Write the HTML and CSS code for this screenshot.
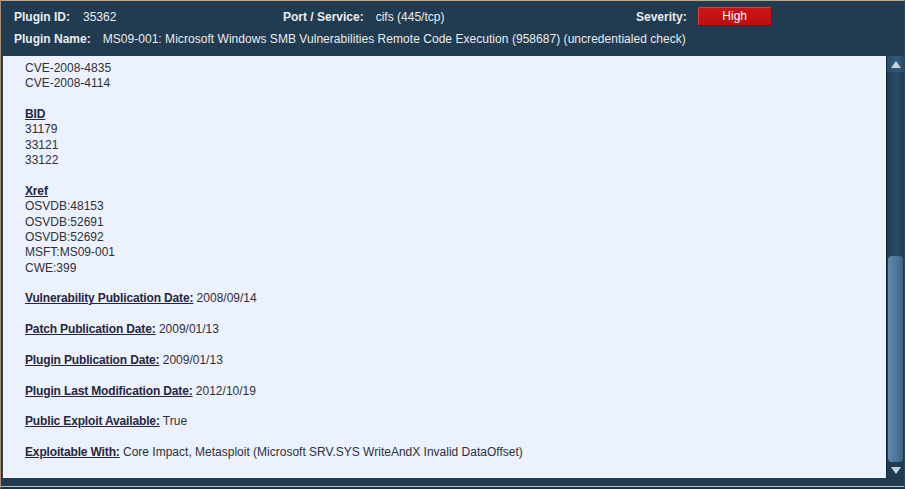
FILE: index.html
```html
<!DOCTYPE html>
<html>
<head>
<meta charset="utf-8">
<link rel="stylesheet" href="styles.css">
</head>
<body>
<div class="frame">
  <div class="header">
    <div class="row row1">
      <div class="field f-id"><span class="lbl">Plugin ID:</span><span class="val">35362</span></div>
      <div class="field f-port"><span class="lbl">Port / Service:</span><span class="val">cifs (445/tcp)</span></div>
      <div class="field f-sev"><span class="lbl">Severity:</span><span class="badge">High</span></div>
    </div>
    <div class="row row2">
      <div class="field"><span class="lbl">Plugin Name:</span><span class="val">MS09-001: Microsoft Windows SMB Vulnerabilities Remote Code Execution (958687) (uncredentialed check)</span></div>
    </div>
  </div>
  <div class="body">
    <div class="content">
      <div class="group">
        <div>CVE-2008-4835</div>
        <div>CVE-2008-4114</div>
      </div>
      <div class="group">
        <div class="h">BID</div>
        <div>31179</div>
        <div>33121</div>
        <div>33122</div>
      </div>
      <div class="group">
        <div class="h">Xref</div>
        <div>OSVDB:48153</div>
        <div>OSVDB:52691</div>
        <div>OSVDB:52692</div>
        <div>MSFT:MS09-001</div>
        <div>CWE:399</div>
      </div>
      <div class="group"><span class="h">Vulnerability Publication Date:</span> 2008/09/14</div>
      <div class="group"><span class="h">Patch Publication Date:</span> 2009/01/13</div>
      <div class="group"><span class="h">Plugin Publication Date:</span> 2009/01/13</div>
      <div class="group"><span class="h">Plugin Last Modification Date:</span> 2012/10/19</div>
      <div class="group"><span class="h">Public Exploit Available:</span> True</div>
      <div class="group"><span class="h">Exploitable With:</span> Core Impact, Metasploit (Microsoft SRV.SYS WriteAndX Invalid DataOffset)</div>
    </div>
    <div class="scrollbar">
      <div class="sb-btn up"><span class="tri-up"></span></div>
      <div class="sb-track">
        <div class="sb-thumb"></div>
      </div>
      <div class="sb-btn down"><span class="tri-down"></span></div>
    </div>
  </div>
  <div class="footer"></div>
</div>
</body>
</html>
```
FILE: styles.css
```css
html, body {
  margin: 0;
  padding: 0;
  background: #203a4f;
}
body {
  width: 905px;
  height: 489px;
  overflow: hidden;
  font-family: "Liberation Sans", Arial, sans-serif;
  font-size: 12px;
}
.frame {
  width: 905px;
  height: 489px;
  box-sizing: border-box;
  border-top: 1px solid #c9a27f;
  border-left: 1px solid #a88a72;
  border-right: 1px solid #2c4658;
  border-bottom: 2px solid #1c3244;
  background: #213b50;
  display: flex;
  flex-direction: column;
}
.header {
  height: 55px;
  box-sizing: border-box;
  padding: 6px 0 0 13px;
  color: #e9ecef;
}
.row {
  display: flex;
  align-items: center;
}
.row1 { height: 19px; }
.row2 { height: 19px; margin-top: 3px; }
.field { display: flex; align-items: center; }
.lbl { font-weight: bold; }
.f-id { width: 269px; }
.f-id .val { margin-left: 13px; }
.f-port { width: 353px; }
.f-port .val { margin-left: 12px; }
.f-sev .lbl { margin-right: 11px; }
.row2 .val { margin-left: 12px; letter-spacing: 0.04px; }
.badge {
  width: 74px;
  height: 19px;
  box-sizing: border-box;
  background: linear-gradient(to bottom, #cc1414, #bd0e0e);
  border: 1px solid #d84040;
  border-bottom-color: #8a0a0a;
  border-right-color: #8a0a0a;
  border-radius: 2px;
  color: #fff;
  text-align: center;
  line-height: 17px;
  font-size: 12px;
}
.body {
  display: flex;
  height: 422px;
  margin-left: 1px;
  border-left: 1px solid #3a3f47;
}
.content {
  flex: 1;
  background: #ecf2fd;
  color: #2f2f38;
  padding: 5px 0 0 22px;
  line-height: 15.36px;
  overflow: hidden;
}
.group { margin-bottom: 15.36px; }
.h {
  font-weight: bold;
  text-decoration: underline;
  color: #26263e;
  letter-spacing: -0.15px;
}
.scrollbar {
  width: 17px;
  border-left: 1px solid #13283a;
  display: flex;
  flex-direction: column;
  background: linear-gradient(to right, #1e3b52, #2b4d66 60%, #1e3a50);
}
.sb-btn {
  height: 16px;
  display: flex;
  align-items: center;
  justify-content: center;
  background: linear-gradient(to right, #2a4c66, #35597a 60%, #2a4a63);
}
.sb-btn.down { background: #203c53; }
.tri-up {
  width: 0; height: 0;
  border-left: 5px solid transparent;
  border-right: 5px solid transparent;
  border-bottom: 7px solid #c9d3dc;
}
.tri-down {
  width: 0; height: 0;
  border-left: 5px solid transparent;
  border-right: 5px solid transparent;
  border-top: 7px solid #c9d3dc;
}
.sb-track {
  flex: 1;
  display: flex;
  flex-direction: column;
  justify-content: flex-end;
  padding: 0 1px;
}
.sb-thumb {
  height: 206px;
  border-radius: 4px;
  background: linear-gradient(to right, #5f89ad, #4f7799 55%, #3f6383);
}
.footer {
  flex: 1;
  border-bottom: 1px solid #b9c3cc;
}
```
